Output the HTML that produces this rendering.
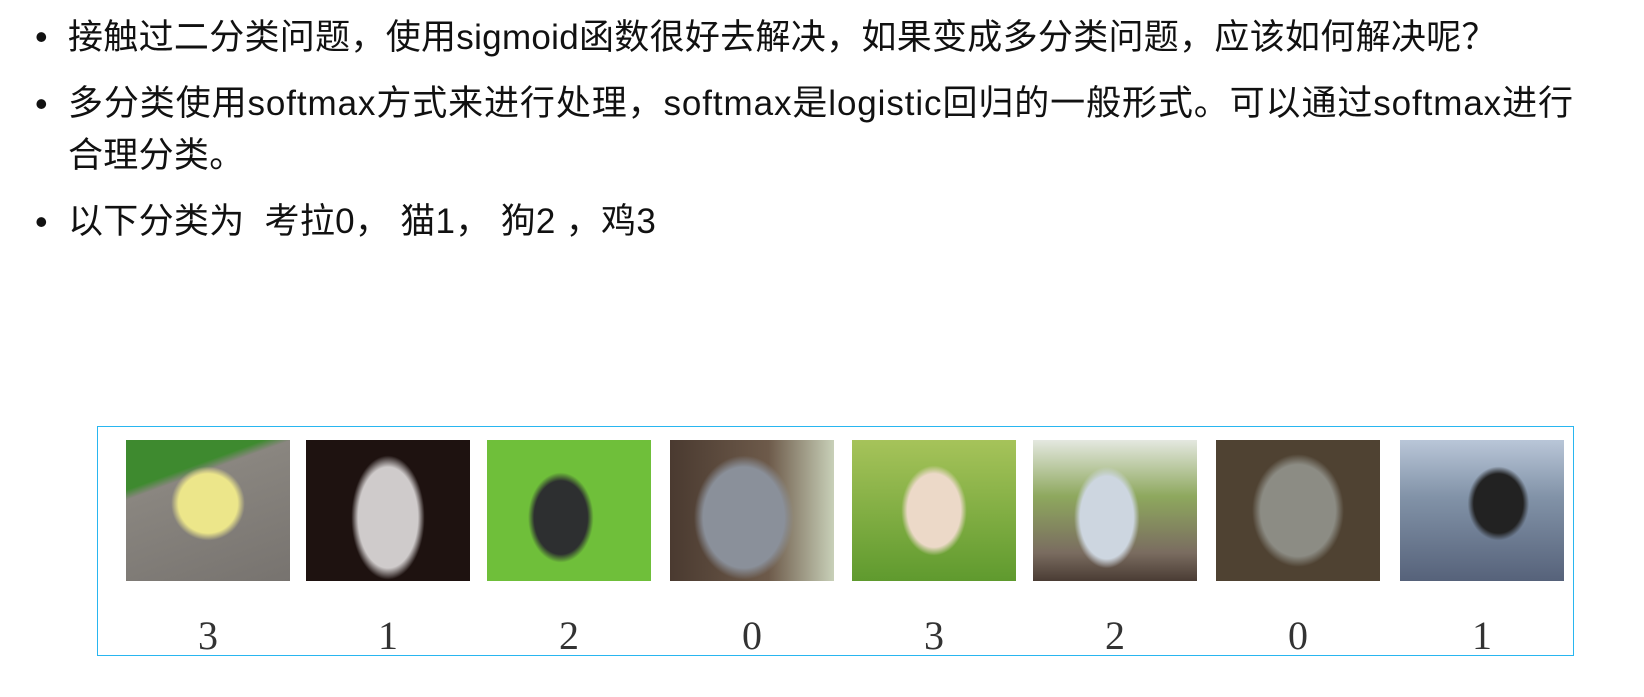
<!DOCTYPE html>
<html><head><meta charset="utf-8"><style>
body{margin:0;width:1644px;height:697px;background:#fff;position:relative;overflow:hidden;font-family:"Liberation Sans","Noto Sans CJK SC",sans-serif;color:#111}
.l{position:absolute;left:68px;font-size:35px;line-height:52px;white-space:nowrap;letter-spacing:0.3px}
.b{position:absolute;left:35px;font-size:36px;line-height:52px}
.box{position:absolute;left:97px;top:426px;width:1475px;height:228px;border:1.5px solid #29b6f0}
.t{position:absolute;top:440px;width:164px;height:141px}
.n{position:absolute;top:612px;width:164px;text-align:center;font-family:"Liberation Serif",serif;font-size:40px;color:#333}
</style></head><body>
<div class="b" style="top:11px">•</div><div class="l" style="top:12px">接触过二分类问题，使用sigmoid函数很好去解决，如果变成多分类问题，应该如何解决呢？</div>
<div class="b" style="top:78px">•</div><div class="l" style="top:78px;letter-spacing:0.9px">多分类使用softmax方式来进行处理，softmax是logistic回归的一般形式。可以通过softmax进行</div>
<div class="l" style="top:130px">合理分类。</div>
<div class="b" style="top:196px">•</div><div class="l" style="top:196px">以下分类为&nbsp;&nbsp;考拉0，&nbsp;猫1，&nbsp;狗2&nbsp;，鸡3</div>
<div class="box"></div>
<div class="t" style="left:126px;background:radial-gradient(ellipse 30% 35% at 50% 45%,#ece68a 60%,transparent 75%),linear-gradient(160deg,#3e8a2f 0 25%,#8a8680 30%,#77736f)"></div>
<div class="t" style="left:306px;background:radial-gradient(ellipse 28% 55% at 50% 55%,#cfcbcb 65%,transparent 80%),#1e1210"></div>
<div class="t" style="left:487px;background:radial-gradient(ellipse 25% 40% at 45% 55%,#2d2f30 65%,transparent 80%),#6fbf3a"></div>
<div class="t" style="left:670px;background:radial-gradient(ellipse 38% 55% at 45% 55%,#8a909a 65%,transparent 80%),linear-gradient(90deg,#4a3a30,#6d5a4a 60%,#c8d0b8)"></div>
<div class="t" style="left:852px;background:radial-gradient(ellipse 25% 40% at 50% 50%,#ecd9c8 65%,transparent 80%),linear-gradient(#a6c35a,#5f9a2e)"></div>
<div class="t" style="left:1033px;background:radial-gradient(ellipse 25% 45% at 45% 55%,#cdd6e0 65%,transparent 80%),linear-gradient(#e4e8e0,#8ea85e 40%,#7a6c60 80%,#4a3c34)"></div>
<div class="t" style="left:1216px;background:radial-gradient(ellipse 35% 50% at 50% 50%,#8c8c84 65%,transparent 80%),#4f4232"></div>
<div class="t" style="left:1400px;background:radial-gradient(ellipse 25% 35% at 60% 45%,#222 60%,transparent 75%),linear-gradient(#b9c6d8,#8293a8 40%,#56627a)"></div>
<div class="n" style="left:126px">3</div><div class="n" style="left:306px">1</div><div class="n" style="left:487px">2</div><div class="n" style="left:670px">0</div><div class="n" style="left:852px">3</div><div class="n" style="left:1033px">2</div><div class="n" style="left:1216px">0</div><div class="n" style="left:1400px">1</div>
</body></html>
